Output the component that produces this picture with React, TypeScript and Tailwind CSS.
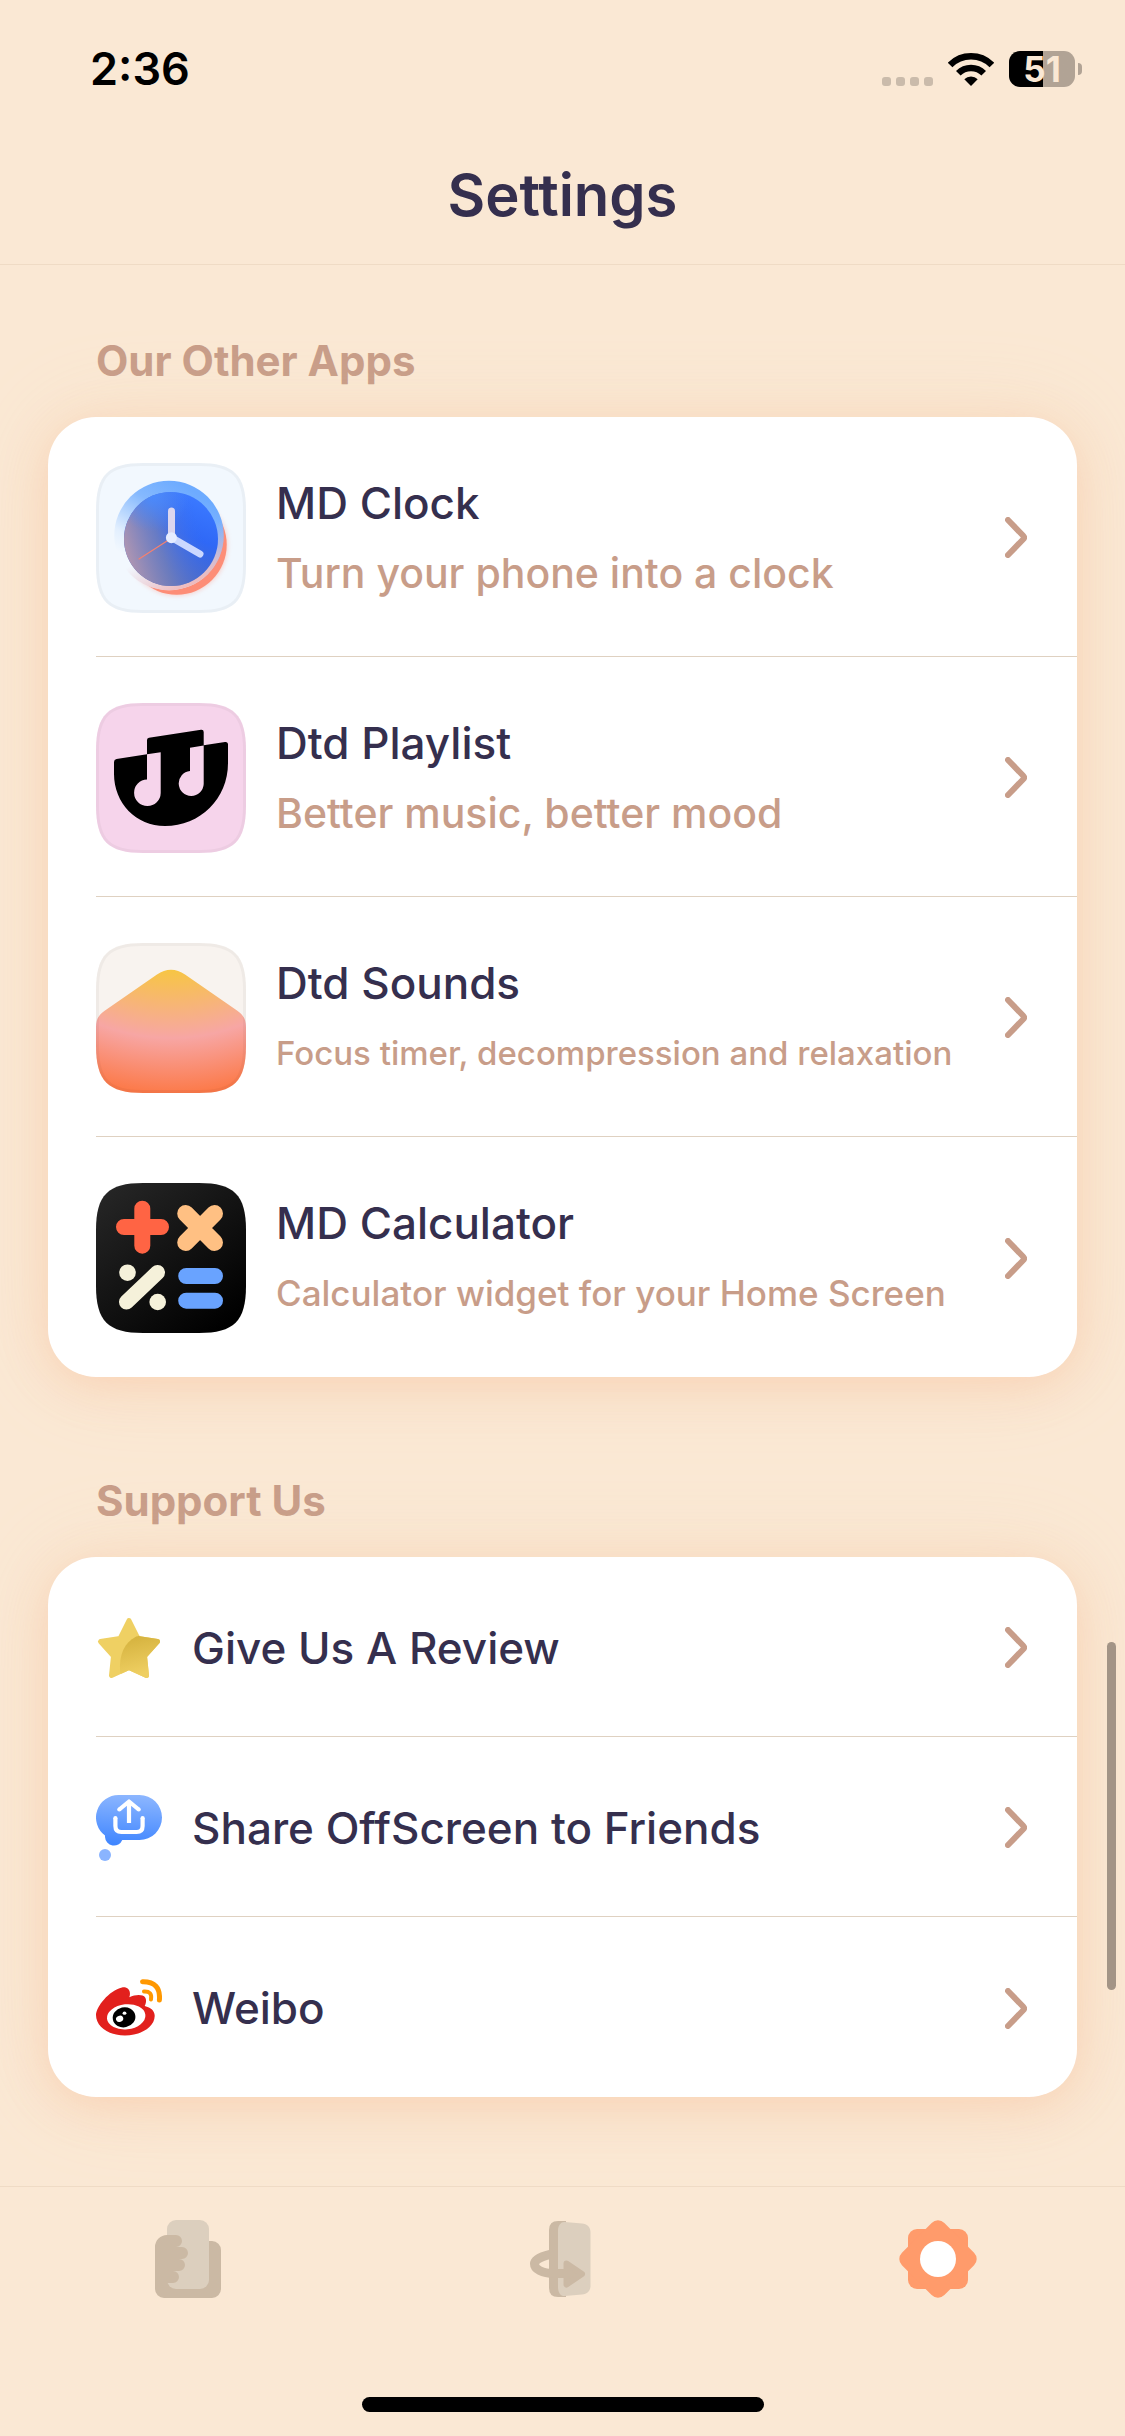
import type { ReactNode } from "react";
import clsx from "clsx";

const SQUIRCLE =
  "M47 0H103C138 0 150 12 150 47V103C150 138 138 150 103 150H47C12 150 0 138 0 103V47C0 12 12 0 47 0Z";

function AppIcon({ id, border = true, children }: { id: string; border?: boolean; children: ReactNode }) {
  return (
    <svg viewBox="0 0 150 150" className="size-[150px] shrink-0" aria-hidden="true">
      <clipPath id={id}>
        <path d={SQUIRCLE} />
      </clipPath>
      <g clipPath={`url(#${id})`}>
        {children}
        {border && <path d={SQUIRCLE} fill="none" stroke="#000" strokeOpacity="0.035" strokeWidth="6" />}
      </g>
    </svg>
  );
}

function ClockIcon() {
  return (
    <AppIcon id="clock-clip">
      <defs>
        <linearGradient id="clock-rim" x1="0.65" y1="0.05" x2="0.2" y2="0.75">
          <stop offset="0" stopColor="#6dabff" />
          <stop offset="0.35" stopColor="#85b9fe" />
          <stop offset="0.8" stopColor="#e2effe" />
          <stop offset="1" stopColor="#f2f8fe" />
        </linearGradient>
        <linearGradient id="clock-rim-warm" x1="0.5" y1="0.6" x2="0.7" y2="1">
          <stop offset="0" stopColor="#e3b6c4" stopOpacity="0" />
          <stop offset="1" stopColor="#f0b4b4" />
        </linearGradient>
        <linearGradient id="clock-face" x1="0.8" y1="0.1" x2="0.45" y2="1">
          <stop offset="0" stopColor="#3a78ff" />
          <stop offset="0.4" stopColor="#2f68f6" />
          <stop offset="1" stopColor="#5468b4" />
        </linearGradient>
        <linearGradient id="clock-glow" x1="0" y1="0.6" x2="0.8" y2="0.35">
          <stop offset="0" stopColor="#b096b2" />
          <stop offset="0.45" stopColor="#7380bc" stopOpacity="0.8" />
          <stop offset="1" stopColor="#3a70f0" stopOpacity="0" />
        </linearGradient>
        <radialGradient id="clock-shine" cx="0.3" cy="0.02" r="0.4">
          <stop offset="0" stopColor="#4a8bff" />
          <stop offset="1" stopColor="#4a8bff" stopOpacity="0" />
        </radialGradient>
        <filter id="clock-soft" x="-20%" y="-20%" width="140%" height="140%">
          <feGaussianBlur stdDeviation="2.5" />
        </filter>
      </defs>
      <rect width="150" height="150" fill="#f2f8fe" />
      <circle cx="81" cy="82" r="50" fill="#ff9a85" opacity="0.5" filter="url(#clock-soft)" />
      <circle cx="80.7" cy="81.7" r="50" fill="#fd8d77" />
      <circle cx="73" cy="72.5" r="54.7" fill="url(#clock-rim)" />
      <circle cx="73" cy="72.5" r="54.7" fill="url(#clock-rim-warm)" />
      <circle cx="75" cy="76" r="47" fill="url(#clock-face)" />
      <circle cx="75" cy="76" r="47" fill="url(#clock-glow)" />
      <circle cx="75" cy="76" r="47" fill="url(#clock-shine)" />
      <g strokeLinecap="round" fill="none">
        <path d="M71 78L43 96" stroke="#f5806f" strokeWidth="1.2" />
        <path d="M75.5 48V74" stroke="#dcd6ee" strokeWidth="7" />
        <path d="M75.5 74.5L104 91" stroke="#cbd8ff" strokeWidth="7" />
      </g>
      <circle cx="75.4" cy="74.7" r="5.5" fill="#e6ecff" />
    </AppIcon>
  );
}

function PlaylistIcon() {
  return (
    <AppIcon id="playlist-clip">
      <rect width="150" height="150" fill="#f6d4eb" />
      <path
        d="M18 59Q18 56.5 20.5 56L51 51.3V37Q51 35 53 34.7L105 26.8Q107.7 26.5 107.7 29V42.3L129 39Q132 38.7 132 41.5V60C132 96 104 123 69 123C40 123 18 100 18 71Z"
        fill="#000"
      />
      <path d="M51 51.3L64.7 49.2V90A13.3 13.3 0 1 1 51 76.5Z" fill="#f6d4eb" />
      <path d="M94 44.7L107.7 42.5V81A12.5 12.5 0 1 1 94 68Z" fill="#f6d4eb" />
    </AppIcon>
  );
}

function SoundsIcon() {
  return (
    <AppIcon id="sounds-clip">
      <radialGradient id="sounds-hill" gradientUnits="userSpaceOnUse" cx="75" cy="-100" r="250">
        <stop offset="0.51" stopColor="#f7c545" />
        <stop offset="0.78" stopColor="#f7a6a4" />
        <stop offset="1" stopColor="#fc7a4a" />
      </radialGradient>
      <rect width="150" height="150" fill="#f8f3ef" />
      <path
        d="M0 84C0 76 3 71.5 9 67.5L61 31.5C70 25 80 25 89 31.5L141 67.5C147 71.5 150 76 150 84V150H0Z"
        fill="url(#sounds-hill)"
      />
    </AppIcon>
  );
}

function CalculatorIcon() {
  return (
    <AppIcon id="calculator-clip" border={false}>
      <linearGradient id="calculator-bg" x1="0" y1="0" x2="0.8" y2="1">
        <stop offset="0" stopColor="#282828" />
        <stop offset="1" stopColor="#000" />
      </linearGradient>
      <rect width="150" height="150" fill="url(#calculator-bg)" />
      <g fill="none" strokeLinecap="round" strokeWidth="16">
        <path d="M46.3 25.7V62.7M28 44H65" stroke="#ff6444" />
        <path d="M89.7 30.5L118.5 59.5M118.5 30.5L89.7 59.5" stroke="#ffc083" strokeWidth="17" />
        <path d="M30.5 119L61.5 89.5" stroke="#f5f1da" strokeWidth="15" />
        <path d="M90.2 93H119M90.2 117.7H119" stroke="#69a3ff" />
      </g>
      <circle cx="31.5" cy="89.7" r="8.3" fill="#f5f1da" />
      <circle cx="61.7" cy="119" r="8.3" fill="#f5f1da" />
    </AppIcon>
  );
}

function StarIcon() {
  const star = "M33 5.5L42 23.5L61.5 26.5L48.5 41L50.5 60.5L33 52.5L15.5 60.5L17.5 41L4.5 26.5L24 23.5Z";
  return (
    <svg viewBox="0 0 66 66" className="size-[66px] shrink-0" aria-hidden="true">
      <defs>
        <linearGradient id="star-shade" x1="0.4" y1="0.2" x2="0.6" y2="1">
          <stop offset="0" stopColor="#d0ad38" />
          <stop offset="1" stopColor="#efcf62" />
        </linearGradient>
        <clipPath id="star-clip">
          <path d="M43.7 20.5C31 24 22 37 24.3 58L33 66H66V18Z" />
        </clipPath>
      </defs>
      <path d={star} fill="#efd063" stroke="#efd063" strokeWidth="5" strokeLinejoin="round" />
      <path
        d={star}
        fill="url(#star-shade)"
        stroke="url(#star-shade)"
        strokeWidth="5"
        strokeLinejoin="round"
        clipPath="url(#star-clip)"
      />
    </svg>
  );
}

function ShareIcon() {
  return (
    <svg viewBox="0 0 66 66" className="size-[66px] shrink-0" aria-hidden="true">
      <linearGradient id="share-bubble" gradientUnits="userSpaceOnUse" x1="33" y1="0" x2="30" y2="50">
        <stop offset="0" stopColor="#8cb6ff" />
        <stop offset="1" stopColor="#4086ff" />
      </linearGradient>
      <path
        d="M22.5 0H43.5A22.5 22.5 0 0 1 43.5 45H26.3A9 9 0 0 1 9 42V40.5A22.5 22.5 0 0 1 22.5 0Z"
        fill="url(#share-bubble)"
      />
      <circle cx="9" cy="60" r="6" fill="#8ab4ff" />
      <path
        d="M33 8V28M23.3 14.5L33 6.5L42.7 14.5M19.4 23V31Q19.4 37 25.4 37H40.6Q46.6 37 46.6 31V23"
        fill="none"
        stroke="#fff"
        strokeWidth="4.2"
        strokeLinejoin="round"
      />
      <g fill="#fff">
        <circle cx="23.3" cy="14.5" r="2.1" />
        <circle cx="42.7" cy="14.5" r="2.1" />
        <circle cx="19.4" cy="23" r="2.1" />
        <circle cx="46.6" cy="23" r="2.1" />
      </g>
    </svg>
  );
}

function WeiboIcon() {
  return (
    <svg viewBox="0 0 66 66" className="size-[66px] shrink-0" aria-hidden="true">
      <path
        d="M0 40C0 32 13 15.5 26 12.5C32 11.5 35.5 16 33.3 22.3C38 20 43 19.3 46.5 20.5C50.5 22 51 26 48.7 31C55 32.5 58.8 36 58.7 41C58.5 52 45 60.5 29 60.5C13 60.5 0 52 0 40Z"
        fill="#e2201d"
      />
      <ellipse cx="30.2" cy="41.8" rx="19.3" ry="12.5" transform="rotate(-6 30 42)" fill="#fff" />
      <ellipse cx="28" cy="42.3" rx="11.4" ry="10" transform="rotate(-12 28 42)" fill="#000" />
      <ellipse cx="23.7" cy="43.7" rx="3.7" ry="3.1" transform="rotate(-20 24 44)" fill="#fff" />
      <ellipse cx="28.5" cy="38.2" rx="1.9" ry="1.6" fill="#fff" />
      <path d="M46.5 6.8Q65 6.5 63.4 25" fill="none" stroke="#ff9800" strokeWidth="5" strokeLinecap="round" />
      <path d="M48 16.5Q56.5 16 55 24.5" fill="none" stroke="#ff9800" strokeWidth="4" strokeLinecap="round" />
    </svg>
  );
}

function Chevron() {
  return (
    <svg viewBox="0 0 22 41" className="h-[41px] w-[22px] shrink-0" aria-hidden="true">
      <path
        d="M3 3L18 18.5Q20 20.5 18 22.5L3 38"
        fill="none"
        stroke="#c89d89"
        strokeWidth="6"
        strokeLinecap="round"
        strokeLinejoin="round"
      />
    </svg>
  );
}

function PhoneIcon() {
  return (
    <svg viewBox="0 0 66 78" className="h-[78px] w-[66px]" aria-hidden="true">
      <path d="M12 15H54V21H57A9 9 0 0 1 66 30V69A9 9 0 0 1 57 78H9A9 9 0 0 1 0 69V27A12 12 0 0 1 12 15Z" fill="#cbb9a4" />
      <rect x="12" width="42" height="69" rx="9" fill="#dccfbe" />
      <path d="M12 15H21A6 6 0 0 1 21 27H27A6 6 0 0 1 27 39H24A6 6 0 0 1 24 51H18A6 6 0 0 1 18 63H12Z" fill="#cbb9a4" />
    </svg>
  );
}

function FlipIcon() {
  return (
    <svg viewBox="0 0 66 78" className="h-[78px] w-[66px]" aria-hidden="true">
      <path d="M36 1H28Q19 1 19 10V68Q19 77 28 77H36Z" fill="#cbb9a4" />
      <path
        d="M28 11C28 5 31 1.5 35 2L52 3.5C57 4 60.5 7 60.5 12V66C60.5 71 57 74 52 74.5L35 76C31 76.5 28 73 28 67Z"
        fill="#dccfbe"
      />
      <path d="M20 34.5C9 37 4.5 40.5 4.5 44C4.5 49 12 53.5 24 53.5H37" fill="none" stroke="#cbb9a4" strokeWidth="9" />
      <path d="M36.5 43.5L52 54L36.5 64.5Z" fill="#cbb9a4" stroke="#cbb9a4" strokeWidth="6" strokeLinejoin="round" />
    </svg>
  );
}

function GearIcon() {
  return (
    <svg viewBox="0 0 78 78" className="size-[78px]" aria-hidden="true">
      <rect x="9" y="9" width="60" height="60" rx="9" fill="#ff9b6b" />
      <rect x="9" y="9" width="60" height="60" rx="9" transform="rotate(45 39 39)" fill="#ff9b6b" />
      <circle cx="39" cy="39" r="18" fill="#fff" />
    </svg>
  );
}

const apps = [
  { name: "MD Clock", tagline: "Turn your phone into a clock", size: "text-[41px]", icon: <ClockIcon /> },
  { name: "Dtd Playlist", tagline: "Better music, better mood", size: "text-[41px]", icon: <PlaylistIcon /> },
  { name: "Dtd Sounds", tagline: "Focus timer, decompression and relaxation", size: "text-[33px]", icon: <SoundsIcon /> },
  { name: "MD Calculator", tagline: "Calculator widget for your Home Screen", size: "text-[35px]", icon: <CalculatorIcon /> },
];

const links = [
  { name: "Give Us A Review", icon: <StarIcon /> },
  { name: "Share OffScreen to Friends", icon: <ShareIcon /> },
  { name: "Weibo", icon: <WeiboIcon /> },
];

const tabs = [
  { name: "Phone", icon: <PhoneIcon />, active: false },
  { name: "Flip", icon: <FlipIcon />, active: false },
  { name: "Settings", icon: <GearIcon />, active: true },
];

function Section({ title, children }: { title: string; children: ReactNode }) {
  return (
    <section className="flex flex-col gap-[26px] px-12">
      <h2 className="px-12 text-[42px] leading-[60px] font-bold text-[#c89d89]">{title}</h2>
      <ul className="rounded-[48px] bg-white pl-12 shadow-[0_9px_45px_rgba(255,155,107,0.25),0_0_90px_rgba(240,215,170,0.2)]">
        {children}
      </ul>
    </section>
  );
}

function Row({ tall, children }: { tall?: boolean; children: ReactNode }) {
  return (
    <li className={clsx("border-b border-[#dfd1c1] last:border-b-0", tall ? "h-[240px]" : "h-[180px]")}>
      <a href="#" className="flex h-full items-center gap-[30px] pt-0.5 pr-[50px]">
        {children}
        <Chevron />
      </a>
    </li>
  );
}

function StatusBar() {
  return (
    <div className="flex h-[138px] items-center justify-between pr-[43px] pl-[90px] text-black">
      <time className="text-[45px] leading-[60px] font-semibold">2:36</time>
      <div className="flex items-center">
        <div className="flex gap-[5px] pt-6">
          <span className="size-[9px] rounded-[3px] bg-[#cabbab]" />
          <span className="size-[9px] rounded-[3px] bg-[#cabbab]" />
          <span className="size-[9px] rounded-[3px] bg-[#cabbab]" />
          <span className="size-[9px] rounded-[3px] bg-[#cabbab]" />
        </div>
        <svg viewBox="0 0 46 33" className="ml-[15px] h-[33px] w-[46px]" aria-hidden="true">
          <path d="M2.1 12A29.5 29.5 0 0 1 43.9 12" fill="none" stroke="#000" strokeWidth="6.5" />
          <path d="M10.3 20.2A18 18 0 0 1 35.7 20.2" fill="none" stroke="#000" strokeWidth="6.5" />
          <path d="M23 33L16.3 26.2A9.5 9.5 0 0 1 29.7 26.2Z" />
        </svg>
        <div className="ml-[15px] flex h-9 w-[66px] items-center justify-center rounded-[11px] bg-linear-to-r from-black from-[34px] to-[#b1a395] to-[34px] text-[35px] leading-9 font-bold text-[#fae8d4]">
          51
        </div>
        <span className="ml-[3px] h-3 w-1 rounded-r-full bg-[#b1a395]" />
      </div>
    </div>
  );
}

export default function App() {
  return (
    <div className="relative flex min-h-screen flex-col bg-[#fae8d4] font-['Inter','Liberation_Sans',sans-serif] text-[#352f4e]">
      <header className="border-b border-[#efdbc5] pb-3">
        <StatusBar />
        <h1 className="text-center text-[58px] leading-[114px] font-semibold">Settings</h1>
      </header>

      <main className="flex flex-1 flex-col gap-[94px] overflow-hidden pt-[66px] pb-[89px]">
        <Section title="Our Other Apps">
          {apps.map((app) => (
            <Row key={app.name} tall>
              {app.icon}
              <span className="flex min-w-0 flex-1 flex-col leading-[70px] font-medium">
                <span className="text-[44px]">{app.name}</span>
                <span className={clsx("whitespace-nowrap text-[#c89d89]", app.size)}>{app.tagline}</span>
              </span>
            </Row>
          ))}
        </Section>

        <Section title="Support Us">
          {links.map((link) => (
            <Row key={link.name}>
              {link.icon}
              <span className="flex-1 text-[44px] leading-[70px] font-medium">{link.name}</span>
            </Row>
          ))}
        </Section>
      </main>

      <nav className="border-t border-[#efdbc5] pt-[33px] pb-6">
        <div className="grid grid-cols-3 justify-items-center">
          {tabs.map((tab) => (
            <button key={tab.name} type="button" aria-label={tab.name} aria-current={tab.active ? "page" : undefined}>
              {tab.icon}
            </button>
          ))}
        </div>
        <div className="mx-auto mt-[99px] h-[15px] w-[402px] rounded-full bg-black" />
      </nav>

      {/* scroll position */}
      <div className="absolute top-[1642px] right-[9px] h-[348px] w-[9px] rounded-full bg-[#a39486]" />
    </div>
  );
}
